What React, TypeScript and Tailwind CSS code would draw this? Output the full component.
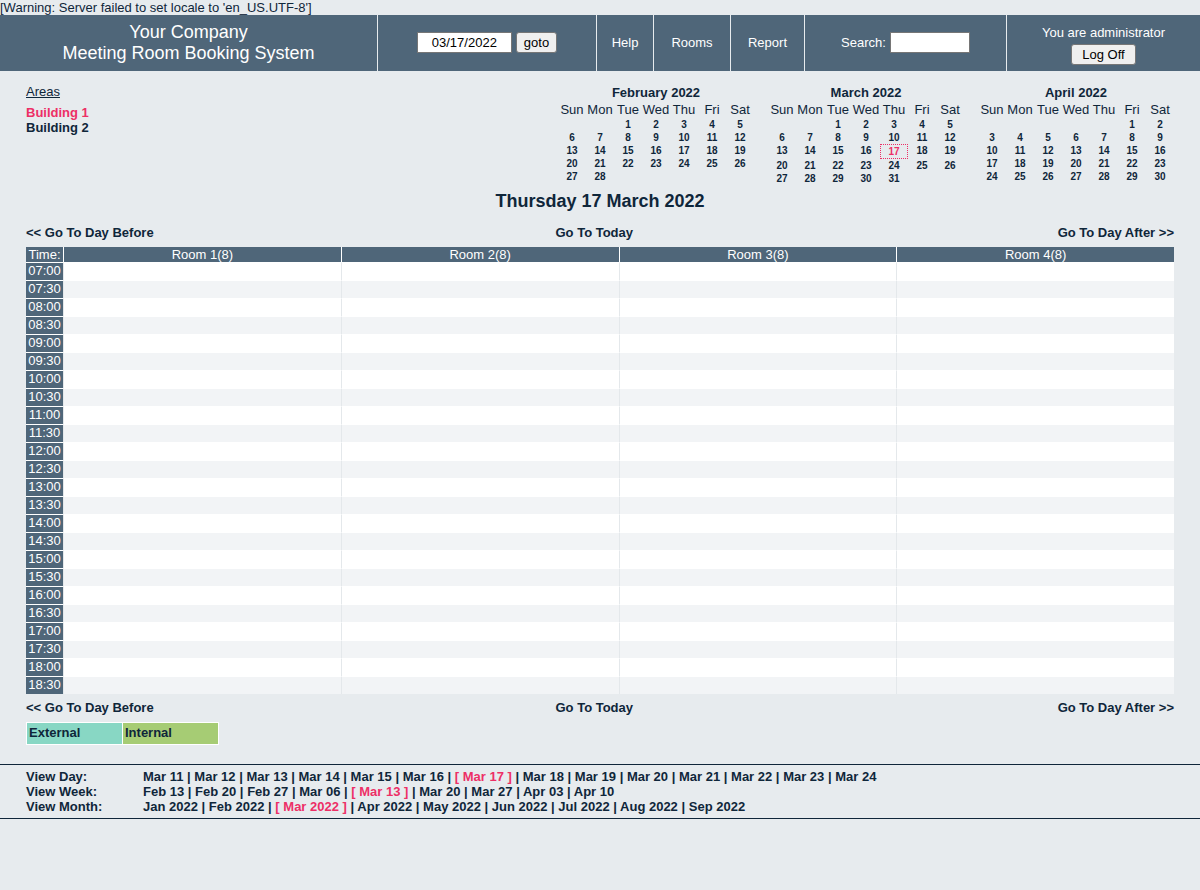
import { Fragment } from "react";

type Month = { name: string; offset: number; days: number; today?: number };

const months: Month[] = [
  { name: "February 2022", offset: 2, days: 28 },
  { name: "March 2022", offset: 2, days: 31, today: 17 },
  { name: "April 2022", offset: 5, days: 30 },
];

const weekdays = ["Sun", "Mon", "Tue", "Wed", "Thu", "Fri", "Sat"];
const rooms = ["Room 1(8)", "Room 2(8)", "Room 3(8)", "Room 4(8)"];
const times = Array.from({ length: 24 }, (_, i) => {
  const hour = String(7 + Math.floor(i / 2)).padStart(2, "0");
  return `${hour}:${i % 2 ? "30" : "00"}`;
});

const trailers = [
  {
    label: "View Day:",
    current: "Mar 17",
    items: ["Mar 11", "Mar 12", "Mar 13", "Mar 14", "Mar 15", "Mar 16", "Mar 17", "Mar 18", "Mar 19", "Mar 20", "Mar 21", "Mar 22", "Mar 23", "Mar 24"],
  },
  {
    label: "View Week:",
    current: "Mar 13",
    items: ["Feb 13", "Feb 20", "Feb 27", "Mar 06", "Mar 13", "Mar 20", "Mar 27", "Apr 03", "Apr 10"],
  },
  {
    label: "View Month:",
    current: "Mar 2022",
    items: ["Jan 2022", "Feb 2022", "Mar 2022", "Apr 2022", "May 2022", "Jun 2022", "Jul 2022", "Aug 2022", "Sep 2022"],
  },
];

function Banner() {
  return (
    <header className="grid min-h-14 grid-cols-[378fr_219fr_57fr_77fr_74fr_202fr_193fr] divide-x divide-[#e7ebee] bg-[#4f6679] text-white">
      <div className="flex flex-col items-center justify-center text-lg leading-[21px]">
        <a href="#company">Your Company</a>
        <a href="#home">Meeting Room Booking System</a>
      </div>
      <form className="flex items-center justify-center gap-1 pb-px" onSubmit={(e) => e.preventDefault()}>
        <input
          type="text"
          aria-label="Date"
          defaultValue="03/17/2022"
          className="h-[21px] w-[95px] border border-[#767676] bg-white text-center text-black"
        />
        <button type="submit" className="h-[21px] rounded-[3px] border border-[#767676] bg-[#efefef] px-[7px] text-black">
          goto
        </button>
      </form>
      <a href="#help" className="flex items-center justify-center pb-px">Help</a>
      <a href="#rooms" className="flex items-center justify-center pb-px">Rooms</a>
      <a href="#report" className="flex items-center justify-center pb-px">Report</a>
      <form className="flex items-center justify-center gap-1 pb-px" onSubmit={(e) => e.preventDefault()}>
        <label htmlFor="search">Search:</label>
        <input id="search" type="text" className="h-[21px] w-20 border border-[#767676] bg-white px-1 text-black" />
      </form>
      <div className="flex flex-col items-center justify-center gap-1 pt-1">
        <a href="#user">You are administrator</a>
        <button type="button" className="h-[21px] rounded-[3px] border border-[#767676] bg-[#efefef] px-2.5 text-black">
          Log Off
        </button>
      </div>
    </header>
  );
}

function MiniCalendar({ month }: { month: Month }) {
  const weeks = Array.from({ length: 5 }, (_, w) =>
    weekdays.map((_, d) => {
      const day = w * 7 + d - month.offset + 1;
      return day >= 1 && day <= month.days ? day : null;
    })
  );
  return (
    <table className="w-[196px] table-fixed border-collapse text-center">
      <caption className="pt-px pb-0.5 font-bold">
        <a href="#month">{month.name}</a>
      </caption>
      <thead>
        <tr>
          {weekdays.map((d) => (
            <th key={d} scope="col" className="p-0 pb-px font-normal">{d}</th>
          ))}
        </tr>
      </thead>
      <tbody className="text-[10px] leading-[13px] font-bold">
        {weeks.map((week, i) => (
          <tr key={i}>
            {week.map((day, j) => (
              <td key={j} className="h-[13px] p-0 align-top">
                {day !== null && (
                  <a
                    href="#day"
                    className={day === month.today ? "block border border-dotted border-[#ed2f66] text-[#ed2f66]" : "block"}
                  >
                    {day}
                  </a>
                )}
              </td>
            ))}
          </tr>
        ))}
      </tbody>
    </table>
  );
}

function DayNav() {
  return (
    <nav className="grid grid-cols-[33fr_33fr_34fr] font-bold">
      <a href="#before">&lt;&lt; Go To Day Before</a>
      <a href="#today" className="text-center">Go To Today</a>
      <a href="#after" className="text-right">Go To Day After &gt;&gt;</a>
    </nav>
  );
}

function Schedule() {
  return (
    <table className="w-full table-fixed border-separate border-spacing-0">
      <colgroup>
        <col className="w-[37px]" />
        {rooms.map((r) => <col key={r} />)}
      </colgroup>
      <thead>
        <tr className="bg-[#4f6679] text-white">
          <th scope="col" className="p-0 font-normal">Time:</th>
          {rooms.map((r) => (
            <th key={r} scope="col" className="border-l border-white p-0 font-normal">
              <a href="#room">{r}</a>
            </th>
          ))}
        </tr>
      </thead>
      <tbody>
        {times.map((t) => (
          <tr key={t} className="bg-white even:bg-[#f2f4f6]">
            <th scope="row" className="h-[18px] border-t border-white bg-[#4f6679] p-0 align-top font-normal text-white">
              <a href="#slot">{t}</a>
            </th>
            {rooms.map((r) => (
              <td key={r} className="border-t border-l border-t-white border-l-[#e4e8eb] p-0" />
            ))}
          </tr>
        ))}
      </tbody>
    </table>
  );
}

export default function App() {
  return (
    <div className="min-h-screen bg-[#e7ebee] font-['Liberation_Sans',Arial,sans-serif] text-[13px] leading-[15px] text-[#0f263a]">
      <p>[Warning: Server failed to set locale to 'en_US.UTF-8']</p>
      <Banner />
      <main className="px-[26px] pt-[13px]">
        <div className="flex items-start justify-between">
          <div>
            <h3 className="mb-1.5 underline">Areas</h3>
            <ul className="font-bold">
              <li><a href="#building1" className="text-[#ed2f66]">Building 1</a></li>
              <li><a href="#building2">Building 2</a></li>
            </ul>
          </div>
          <div className="flex items-start gap-3.5">
            {months.map((m) => <MiniCalendar key={m.name} month={m} />)}
          </div>
        </div>
        <h2 className="mt-1.5 mb-3.5 text-center text-lg leading-5 font-bold">Thursday 17 March 2022</h2>
        <DayNav />
        <div className="mt-[7px] mb-1.5"><Schedule /></div>
        <DayNav />
        <table className="mt-[7px] border-collapse text-left">
          <tbody>
            <tr>
              <td className="h-[22px] w-24 border border-white bg-[#88d7c4] px-0.5 pt-0.5 align-top font-bold">External</td>
              <td className="h-[22px] w-24 border border-white bg-[#a6cc74] px-0.5 pt-0.5 align-top font-bold">Internal</td>
            </tr>
          </tbody>
        </table>
      </main>
      <footer className="mt-[19px] border-y border-[#0f263a] px-[26px] py-1 font-bold">
        {trailers.map((row) => (
          <div key={row.label} className="flex">
            <div className="w-[117px] shrink-0">{row.label}</div>
            <div>
              {row.items.map((item, i) => (
                <Fragment key={item}>
                  {i > 0 && " | "}
                  {item === row.current ? (
                    <a href="#view" className="text-[#ed2f66]">[ {item} ]</a>
                  ) : (
                    <a href="#view">{item}</a>
                  )}
                </Fragment>
              ))}
            </div>
          </div>
        ))}
      </footer>
    </div>
  );
}
